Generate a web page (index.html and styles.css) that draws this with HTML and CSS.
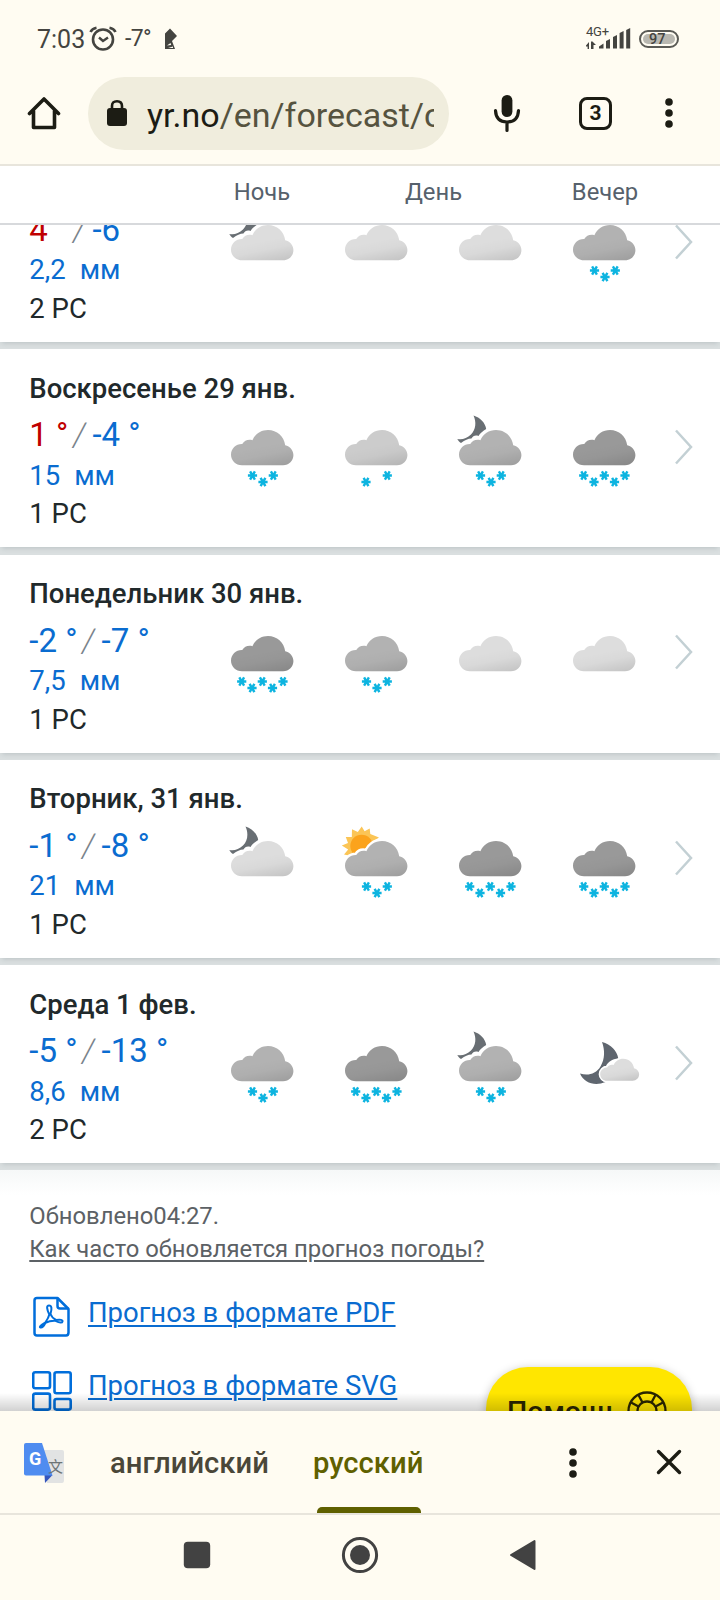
FILE: index.html
```html
<!DOCTYPE html>
<html lang="ru">
<head>
<meta charset="utf-8">
<title>Прогноз погоды</title>
<link rel="stylesheet" href="styles.css">
</head>
<body>
<svg class="defs" width="0" height="0" aria-hidden="true">
  <defs>
    <linearGradient id="shade" x1="0.5" y1="0.45" x2="0.72" y2="1.05">
      <stop offset="0" stop-color="#000" stop-opacity="0"/>
      <stop offset="0.4" stop-color="#000" stop-opacity="0.02"/>
      <stop offset="1" stop-color="#000" stop-opacity="0.11"/>
    </linearGradient>
    <path id="cloud-shape" d="M11 35.3C4.8 35.3 0 30.6 0 24.8C0 18.6 5 13.8 11.2 14C13.4 10.6 17.2 9 21.4 10.2C24 4 30 0 37 0C46 0 53 6.4 54.2 15.2C59 16.4 62.4 20.2 62.4 25C62.4 30.8 58 35.3 52 35.3Z"/>
    <g id="cloud">
      <use href="#cloud-shape" fill="#fff" stroke="#fff" stroke-width="5"/>
      <use href="#cloud-shape" fill="currentColor"/>
      <use href="#cloud-shape" fill="url(#shade)"/>
    </g>
    <g id="flake" stroke="#0db4e0" stroke-width="2.4" stroke-linecap="butt">
      <path d="M-4.6 0H4.6M-2.4 -4.2L2.4 4.2M2.4 -4.2L-2.4 4.2"/>
    </g>
    <g id="snow2"><use href="#flake" x="40" y="82"/><use href="#flake" x="61.3" y="75.5"/></g>
    <g id="snow3"><use href="#flake" x="40.5" y="75.5"/><use href="#flake" x="51" y="82"/><use href="#flake" x="61.3" y="75.5"/></g>
    <g id="snow5"><use href="#flake" x="29.7" y="75.5"/><use href="#flake" x="40" y="82"/><use href="#flake" x="50.3" y="75.5"/><use href="#flake" x="60.5" y="82"/><use href="#flake" x="71" y="75.5"/></g>
    <path id="moon" fill="#686e73" d="M33.5 15.5C40 17.5 45.5 23 46.2 29C43 31 40 33 38.5 36C35 35 33 36 31.5 38.5C28 38.5 25 40 21 43C19.5 42 18 40.5 17.3 39C22 40 27 38.5 31 34.5C36 29.5 36.5 22 33.5 15.5Z"/>
    <g id="sun">
      <path fill="#fbc556" d="M35.7 15.5L38.6 20.3L43.7 17.5L44.3 23L53 26.5L46 31L48 40L25 45L18 43.5L22.2 38.5L15.8 34.5L22 32L19.8 26L25.8 26L26 18.2L31.8 21Z"/>
      <circle cx="35.6" cy="35" r="11.3" fill="#fba31c"/>
    </g>
    <path id="big-moon" fill="#5f666f" d="M48 26C57 28.5 63 34.5 64.3 42.5C58 43 54 46 52 50C47 51 45 56 46.500 61C47 64 49 65.500 51.500 66C41 70.500 30 67 26 57.500C34 60 42 58 46.500 50.500C51 43 51 34 48 26Z"/>
  </defs>
</svg>

<div class="screen">
  <header class="status">
    <span class="clock">7:03</span>
    <svg class="alarm" width="28" height="26" viewBox="0 0 28 26" fill="none" stroke="#444440" stroke-width="2.6"><circle cx="14" cy="13.500" r="10"/><path d="M10 11.500L14 15L19 11.500" stroke-width="2.400"/><path d="M1.500 6Q3 2.500 7.500 1.700M26.500 6Q25 2.500 20.500 1.700"/></svg>
    <span class="outside">-7°</span>
    <svg class="flag" width="14" height="22" viewBox="0 0 14 22"><path fill="#444440" d="M6 0.500L13 8L8 13L11 21H1V5.500Z"/><path fill="#fffcf2" d="M3 17.500L6.500 15L7.200 17ZM4 20L9 18.500V20Z"/></svg>
    <span class="network">
      <span class="net-name">4G+</span>
      <svg width="46" height="24" viewBox="0 0 46 24" fill="#444440"><path d="M0 18.500L3 15V22H1.600V19.500H0ZM5 14.500H6.500L10 18H7.500V22H5Z"/><path d="M13 21.500V19.500L17.500 16.500V21.500ZM20 21.500V14L24 12V21.500ZM27 21.500V10L31 8V21.500ZM33.600 21.500V6L37.600 4V21.500ZM40.200 21.500V3L44.200 1V21.500Z"/></svg>
    </span>
    <span class="battery"><span class="charge">97</span></span>
  </header>

  <nav class="toolbar">
    <svg class="home" width="34" height="36" viewBox="0 0 34 36" fill="none" stroke="#1c1c14" stroke-width="3.600" stroke-linejoin="round" stroke-linecap="round"><path d="M2.500 18.500L17 4L31.500 18.500M6.500 16V32.500H27.500V16"/></svg>
    <div class="address">
      <svg class="lock" width="22" height="28" viewBox="0 0 22 28"><path d="M6 11V7Q6 2.200 11 2.200T16 7V11" fill="none" stroke="#1c1c14" stroke-width="2.600"/><rect x="1" y="9" width="20" height="18" rx="3" fill="#1c1c14"/></svg>
      <span class="url"><b>yr.no</b>/en/forecast/c</span>
    </div>
    <svg class="mic" width="28" height="40" viewBox="0 0 28 40"><rect x="8.600" y="2" width="10.800" height="22" rx="5.400" fill="#1c1c14"/><path d="M2.500 17.500Q3 29 14 29T25.500 17.500M14 29V37.500" fill="none" stroke="#1c1c14" stroke-width="3.200" stroke-linecap="round"/></svg>
    <span class="tabs">3</span>
    <svg class="dots" width="8" height="32" viewBox="0 0 8 32" fill="#1c1c14"><circle cx="4" cy="5" r="3.800"/><circle cx="4" cy="16" r="3.800"/><circle cx="4" cy="27" r="3.800"/></svg>
  </nav>

  <div class="periods"><span>Ночь</span><span>День</span><span>Вечер</span></div>

  <main class="page">
    <div class="days">
      <article class="day">
        <div class="info"><h2></h2><p class="temp"><span class="warm">4 °</span><i>/</i><span>-6 °</span></p><p class="rain">2,2<span>мм</span></p><p>2 РС</p></div>
        <div class="icons">
          <svg viewBox="0 0 100 100"><use href="#moon"/><use href="#cloud" x="19" y="30" color="#dddddd"/></svg>
          <svg viewBox="0 0 100 100"><use href="#cloud" x="19" y="30" color="#dddddd"/></svg>
          <svg viewBox="0 0 100 100"><use href="#cloud" x="19" y="30" color="#dddddd"/></svg>
          <svg viewBox="0 0 100 100"><use href="#cloud" x="19" y="30" color="#b2b2b2"/><use href="#snow3"/></svg>
        </div>
        <svg class="more" viewBox="0 0 20 36"><path d="M2 1.500L17 18L2 34.500"/></svg>
      </article>
      <article class="day">
        <div class="info"><h2>Воскресенье 29 янв.</h2><p class="temp"><span class="warm">1 °</span><i>/</i><span>-4 °</span></p><p class="rain">15<span>мм</span></p><p>1 РС</p></div>
        <div class="icons">
          <svg viewBox="0 0 100 100"><use href="#cloud" x="19" y="30" color="#b2b2b2"/><use href="#snow3"/></svg>
          <svg viewBox="0 0 100 100"><use href="#cloud" x="19" y="30" color="#cccccc"/><use href="#snow2"/></svg>
          <svg viewBox="0 0 100 100"><use href="#moon"/><use href="#cloud" x="19" y="30" color="#b2b2b2"/><use href="#snow3"/></svg>
          <svg viewBox="0 0 100 100"><use href="#cloud" x="19" y="30" color="#999999"/><use href="#snow5"/></svg>
        </div>
        <svg class="more" viewBox="0 0 20 36"><path d="M2 1.500L17 18L2 34.500"/></svg>
      </article>
      <article class="day">
        <div class="info"><h2>Понедельник 30 янв.</h2><p class="temp"><span>-2 °</span><i>/</i><span>-7 °</span></p><p class="rain">7,5<span>мм</span></p><p>1 РС</p></div>
        <div class="icons">
          <svg viewBox="0 0 100 100"><use href="#cloud" x="19" y="30" color="#999999"/><use href="#snow5"/></svg>
          <svg viewBox="0 0 100 100"><use href="#cloud" x="19" y="30" color="#b2b2b2"/><use href="#snow3"/></svg>
          <svg viewBox="0 0 100 100"><use href="#cloud" x="19" y="30" color="#dddddd"/></svg>
          <svg viewBox="0 0 100 100"><use href="#cloud" x="19" y="30" color="#dddddd"/></svg>
        </div>
        <svg class="more" viewBox="0 0 20 36"><path d="M2 1.500L17 18L2 34.500"/></svg>
      </article>
      <article class="day">
        <div class="info"><h2>Вторник, 31 янв.</h2><p class="temp"><span>-1 °</span><i>/</i><span>-8 °</span></p><p class="rain">21<span>мм</span></p><p>1 РС</p></div>
        <div class="icons">
          <svg viewBox="0 0 100 100"><use href="#moon"/><use href="#cloud" x="19" y="30" color="#dddddd"/></svg>
          <svg viewBox="0 0 100 100"><use href="#sun"/><use href="#cloud" x="19" y="30" color="#b2b2b2"/><use href="#snow3"/></svg>
          <svg viewBox="0 0 100 100"><use href="#cloud" x="19" y="30" color="#999999"/><use href="#snow5"/></svg>
          <svg viewBox="0 0 100 100"><use href="#cloud" x="19" y="30" color="#999999"/><use href="#snow5"/></svg>
        </div>
        <svg class="more" viewBox="0 0 20 36"><path d="M2 1.500L17 18L2 34.500"/></svg>
      </article>
      <article class="day">
        <div class="info"><h2>Среда 1 фев.</h2><p class="temp"><span>-5 °</span><i>/</i><span>-13 °</span></p><p class="rain">8,6<span>мм</span></p><p>2 РС</p></div>
        <div class="icons">
          <svg viewBox="0 0 100 100"><use href="#cloud" x="19" y="30" color="#b2b2b2"/><use href="#snow3"/></svg>
          <svg viewBox="0 0 100 100"><use href="#cloud" x="19" y="30" color="#999999"/><use href="#snow5"/></svg>
          <svg viewBox="0 0 100 100"><use href="#moon"/><use href="#cloud" x="19" y="30" color="#b2b2b2"/><use href="#snow3"/></svg>
          <svg viewBox="0 0 100 100"><use href="#big-moon"/><g transform="translate(46.200 42.700) scale(0.624)"><use href="#cloud" color="#dddddd"/></g></svg>
        </div>
        <svg class="more" viewBox="0 0 20 36"><path d="M2 1.500L17 18L2 34.500"/></svg>
      </article>
    </div>

    <section class="meta">
      <p>Обновлено04:27.</p>
      <p><a>Как часто обновляется прогноз погоды?</a></p>
    </section>
    <section class="files">
      <div class="file">
        <svg width="40" height="42" viewBox="0 0 40 42" fill="none" stroke="#006edb" stroke-width="2.500" stroke-linejoin="round"><path d="M5 2H25.500L36.500 13V36.500Q36.500 39.500 34 39.500H5Q2.500 39.500 2.500 37V4.500Q2.500 2 5 2Z"/><path d="M25.500 2V10Q25.500 12.500 28 12.500H36.500"/><path stroke-width="2" d="M17.500 19Q13 9.500 17 9.500T18.500 18Q20 22 24 24Q31 23 30.500 25.500T23.500 24.800Q18 24.500 13.500 26.800Q11 32 8.500 31.500T13.500 26.300Q16.500 22 17.500 18"/></svg>
        <a>Прогноз в формате PDF</a>
      </div>
      <div class="file">
        <svg width="40" height="42" viewBox="0 0 40 42" fill="none" stroke="#006edb" stroke-width="2.600"><rect x="1.200" y="2.200" width="16.800" height="16" rx="2"/><rect x="22.500" y="2.200" width="16.200" height="21" rx="2"/><rect x="1.200" y="23.600" width="16.800" height="16" rx="2"/><rect x="22.500" y="29" width="16.200" height="10.600" rx="2"/></svg>
        <a>Прогноз в формате SVG</a>
      </div>
    </section>
    <button class="help">Помощь
      <svg width="40" height="40" viewBox="0 0 40 40" fill="none" stroke="#2a2600" stroke-width="2.300"><circle cx="20" cy="20" r="18.500"/><circle cx="20" cy="20" r="9.500"/><path d="M15.500 11.500L11.500 4M24.500 11.500L28.500 4M11.500 15.500L4 11.500M28.500 15.500L36 11.500"/></svg>
    </button>
  </main>

  <div class="translate">
    <span class="gt">
      <svg width="42" height="42" viewBox="0 0 42 42"><path fill="#e2e3e3" d="M18 8H39Q41 8 41 10V38Q41 41 39 41H24Z"/><path fill="#3556bd" d="M21.500 33H29.500L22 41Z"/><path fill="#4f8cf0" d="M3 1H19L29.500 33.500H3Q1 33.500 1 31.500V3Q1 1 3 1Z"/></svg>
      <b>G</b><em>文</em>
    </span>
    <span class="lang">английский</span>
    <span class="lang active">русский</span>
    <svg class="tdots" width="8" height="32" viewBox="0 0 8 32" fill="#1c1c14"><circle cx="4" cy="5" r="3.800"/><circle cx="4" cy="16" r="3.800"/><circle cx="4" cy="27" r="3.800"/></svg>
    <svg class="close" width="26" height="26" viewBox="0 0 26 26" stroke="#1c1c14" stroke-width="3.400" stroke-linecap="round"><path d="M2.500 2.500L23.500 23.500M23.500 2.500L2.500 23.500"/></svg>
  </div>

  <footer class="system">
    <svg width="38" height="38" viewBox="0 0 38 38"><rect x="5.800" y="5.800" width="26.400" height="26.400" rx="4" fill="#424242"/></svg>
    <svg width="38" height="38" viewBox="0 0 38 38"><circle cx="19" cy="19" r="16.600" fill="none" stroke="#424242" stroke-width="3"/><circle cx="19" cy="19" r="10" fill="#424242"/></svg>
    <svg width="38" height="38" viewBox="0 0 38 38"><path d="M7 19L30.500 5V33Z" fill="#424242" stroke="#424242" stroke-width="2" stroke-linejoin="round"/></svg>
  </footer>
</div>
</body>
</html>
```
FILE: styles.css
```css
* { box-sizing: border-box; }
body { margin: 0; background: #fff; font-family: Roboto, "Noto Sans", sans-serif; color: #21292b; }
h2, p { margin: 0; }
svg { display: block; flex: none; }
.defs { position: absolute; }
.screen { width: 720px; height: 1600px; display: flex; flex-direction: column; overflow: hidden; }

.status { height: 76px; background: #fffcf2; display: flex; align-items: center; padding: 1px 41px 0 37px; color: #444440; flex: none; }
.clock { font-size: 25px; width: 52px; padding-top: 2px; }
.outside { font-size: 23px; margin-left: 8px; width: 36px; letter-spacing: -0.700px; }
.flag { margin-left: 3px; }
.network { margin-left: auto; width: 46px; position: relative; padding-top: 1px; }
.net-name { position: absolute; left: 0; top: -2px; font-size: 13px; line-height: 15px; letter-spacing: -0.200px; }
.battery { margin-left: 7px; width: 40px; height: 18px; border: 2px solid #5a5a55; border-radius: 9px; padding: 2px; }
.charge { display: block; height: 10px; line-height: 11px; border-radius: 5px; background: #b9b8b1; font-size: 14.500px; padding-left: 6px; font-weight: 500; }

.toolbar { height: 90px; background: #fffcf2; border-bottom: 2px solid #e8e5dc; display: flex; align-items: flex-start; flex: none; padding-left: 27px; }
.home { margin-top: 19px; }
.address { margin: 1px 0 0 27px; width: 361px; height: 73px; border-radius: 37px; background: #f0eddd; display: flex; align-items: center; padding: 0 15px 0 18px; }
.lock { margin-top: -1px; }
.url { margin-left: 19px; flex: 1; overflow: hidden; white-space: nowrap; font-size: 34px; color: #56533f; line-height: 44px; padding-top: 2px; }
.url b { font-weight: 400; color: #1c1c14; }
.mic { margin: 17px 0 0 44px; }
.tabs { margin: 21px 0 0 58px; width: 33px; height: 33px; border: 3px solid #1c1c14; border-radius: 8px; font-size: 21px; font-weight: 700; line-height: 27px; text-align: center; color: #1c1c14; }
.dots { margin: 21px 0 0 52.500px; }

.periods { height: 59px; padding: 0 59px 0 205px; border-bottom: 2px solid #d7d9dc; display: grid; grid-template-columns: 114px 229px 114px; font-size: 23.800px; line-height: 52px; color: #56616c; text-align: center; background: #fff; flex: none; }
.page { height: 1185.500px; overflow: hidden; position: relative; flex: none; background: #fff; }
.page::after { content: ""; position: absolute; left: 0; right: 0; bottom: 0; height: 18px; background: linear-gradient(rgba(0,0,0,0), rgba(0,0,0,0.180)); }

.days { margin-top: -81px; display: flex; flex-direction: column; gap: 7.330px; background: #dadfe0; }
.day { height: 198px; background: #fff; display: flex; box-shadow: 0 3px 5px -2px rgba(60,80,85,0.200); padding: 20.300px 0 0 29.300px; }
.info { width: 175.700px; font-size: 27.500px; line-height: 38.500px; white-space: nowrap; }
.info h2 { font-size: 27.500px; font-weight: 500; height: 38.500px; }
.temp { font-size: 33px; line-height: 43.500px; margin-top: 5.200px; color: #0a6cd0; display: flex; }
.temp .warm { color: #c00000; }
.temp i { font-style: normal; font-weight: 300; color: #7a838b; margin: 0 6px 0 5px; transform: skewX(-8deg); }
.rain { color: #0a6cd0; }
.rain span { margin-left: 14px; }
.icons { display: flex; padding-top: 30.700px; }
.icons svg { width: 100px; height: 100px; margin: 0 7px; }
.more { width: 20px; height: 36px; margin: 59.500px 0 0 13px; fill: none; stroke: #c3d0d4; stroke-width: 2.500; }

.meta { border-top: 7.500px solid #dadfe0; padding: 30px 0 0 29.300px; font-size: 23.830px; line-height: 33px; color: #5c6165; background: linear-gradient(#f6f8f8, #fff 25px); }
.meta a { text-decoration: underline; text-underline-offset: 3px; text-decoration-thickness: 2px; }
.files { padding: 30px 0 0 32px; }
.file { display: flex; height: 73.300px; font-size: 27.500px; line-height: 38px; color: #0a6cd0; }
.file a { margin-left: 16px; text-decoration: underline; text-underline-offset: 3px; text-decoration-thickness: 2px; margin-top: -2.500px; }
.help { position: absolute; left: 486px; top: 1142px; width: 206px; height: 88px; border: 0; border-radius: 42px; background: #ffe600; box-shadow: 0 2px 10px rgba(0,0,0,0.250); display: flex; align-items: center; font: 500 28.500px Roboto, sans-serif; color: #2a2600; padding: 0 0 0 21px; }
.help svg { margin-left: auto; margin-right: 25.500px; }

.translate { height: 104.500px; background: #fffcf2; border-bottom: 2px solid #e8e5dc; display: flex; align-items: flex-start; flex: none; padding-left: 23px; }
.gt { position: relative; width: 42px; height: 42px; margin-top: 31px; flex: none; }
.gt b { position: absolute; left: 6px; top: 7px; font: 700 18px/20px Roboto, sans-serif; color: #fff; }
.gt em { position: absolute; left: 25px; top: 15px; font: 400 15px/18px "Noto Sans CJK SC", sans-serif; color: #6d7476; }
.lang { margin-left: 45px; width: 158px; height: 102.500px; padding-top: 2.500px; line-height: 101px; font-size: 29.200px; font-weight: 500; color: #4a4739; flex: none; }
.active { width: 110px; color: #5f6000; position: relative; }
.active::after { content: ""; position: absolute; left: 3.500px; width: 104px; bottom: 0; height: 6px; border-radius: 5px 5px 0 0; background: #5f6000; }
.tdots { margin: 36px 0 0 146px; }
.close { margin: 38px 0 0 79px; }

.system { height: 85px; background: #fffcf2; display: flex; flex: none; padding: 21px 0 0 178px; gap: 125px; }
```
